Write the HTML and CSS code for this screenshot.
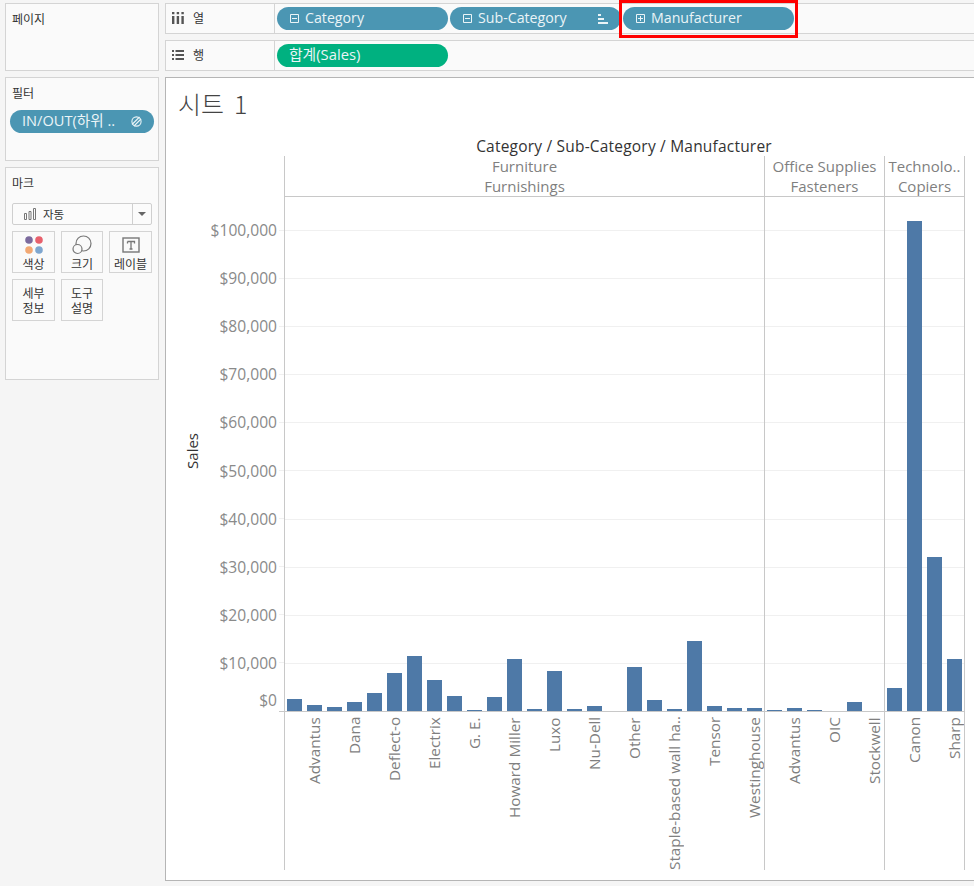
FILE: index.html
```html
<!DOCTYPE html>
<html lang="ko">
<head>
<meta charset="utf-8">
<title>시트 1</title>
<link rel="stylesheet" href="styles.css">
</head>
<body>
<div class="app">
  <aside class="side">
    <section class="card card-pages"><h2 class="card-title">페이지</h2></section>
    <section class="card card-filters">
      <h2 class="card-title">필터</h2>
      <div class="pill pill-filter">
        <span class="pill-text">IN/OUT(하위 ..</span>
        <svg class="link-icon" width="13" height="13" viewBox="0 0 13 13"><circle cx="6.5" cy="6.5" r="4.6" fill="none" stroke="#eaf4f7" stroke-width="1.1"/><path d="M2 9.5 9.5 2M4 11l7-7" stroke="#eaf4f7" stroke-width="1.1" fill="none"/></svg>
      </div>
    </section>
    <section class="card card-marks">
      <h2 class="card-title">마크</h2>
      <div class="select">
        <svg class="select-icon" width="14" height="12" viewBox="0 0 14 12"><path d="M1.5 5.5h2v6h-2zM6 3.5h2v8H6zM10.5.5h2v11h-2z" fill="none" stroke="#777"/></svg>
        <span class="select-text">자동</span>
        <span class="select-arrow"></span>
      </div>
      <div class="mark-grid">
        <div class="mark-btn">
          <svg width="20" height="20" viewBox="0 0 20 20"><circle cx="5" cy="5" r="3.8" fill="#7b6a9d"/><circle cx="15" cy="5" r="3.8" fill="#e8606c"/><circle cx="5" cy="15" r="3.8" fill="#f2a873"/><circle cx="15" cy="15" r="3.8" fill="#7ea6cf"/></svg>
          <span>색상</span>
        </div>
        <div class="mark-btn">
          <svg width="20" height="20" viewBox="0 0 20 20"><circle cx="11.5" cy="8.5" r="7.5" fill="none" stroke="#777" stroke-width="1.2"/><circle cx="5.5" cy="14" r="4.5" fill="#fafafa" stroke="#777" stroke-width="1.2"/></svg>
          <span>크기</span>
        </div>
        <div class="mark-btn">
          <svg width="18" height="20" viewBox="0 0 18 20"><rect x="1" y="3" width="16" height="14" fill="none" stroke="#777" stroke-width="1.4"/><path d="M5.5 6.5h7v2M9 6.5v7.5M7.5 14h3M5.5 6.5v2" fill="none" stroke="#777" stroke-width="1.3"/></svg>
          <span>레이블</span>
        </div>
        <div class="mark-btn mark-btn-text"><span>세부<br>정보</span></div>
        <div class="mark-btn mark-btn-text"><span>도구<br>설명</span></div>
      </div>
    </section>
  </aside>

  <main class="main">
    <div class="shelf">
      <div class="shelf-label">
        <svg width="12" height="12" viewBox="0 0 12 12"><path d="M0 4h2.4v8H0zM4.7 4h2.4v8H4.7zM9.4 4h2.4v8H9.4zM0 0h2.4v2.2H0zM4.7 0h2.4v2.2H4.7zM9.4 0h2.4v2.2H9.4z" fill="#555"/></svg>
        <span>열</span>
      </div>
      <div class="shelf-body">
        <div class="pill">
          <svg class="box-icon" width="9" height="9" viewBox="0 0 9 9"><path d="M.5.5h8v8h-8zM2 4.5h5" fill="none" stroke="#eaf4f7"/></svg>
          <span class="pill-text">Category</span>
        </div>
        <div class="pill">
          <svg class="box-icon" width="9" height="9" viewBox="0 0 9 9"><path d="M.5.5h8v8h-8zM2 4.5h5" fill="none" stroke="#eaf4f7"/></svg>
          <span class="pill-text">Sub-Category</span>
          <svg class="sort-icon" width="10" height="10" viewBox="0 0 10 10"><path d="M0 0h3v2H0zM0 4h6v2H0zM0 8h10v2H0z" fill="#eaf4f7"/></svg>
        </div>
        <div class="pill">
          <svg class="box-icon" width="9" height="9" viewBox="0 0 9 9"><path d="M.5.5h8v8h-8zM2 4.5h5M4.5 2v5" fill="none" stroke="#eaf4f7"/></svg>
          <span class="pill-text">Manufacturer</span>
        </div>
      </div>
    </div>
    <div class="shelf">
      <div class="shelf-label">
        <svg width="12" height="10" viewBox="0 0 12 10"><path d="M0 0h2v2H0zM3.5 0H12v2H3.5zM0 4h2v2H0zM3.5 4H12v2H3.5zM0 8h2v2H0zM3.5 8H12v2H3.5z" fill="#555"/></svg>
        <span>행</span>
      </div>
      <div class="shelf-body">
        <div class="pill pill-green"><span class="pill-text">합계(Sales)</span></div>
      </div>
    </div>

    <section class="viz">
      <h1 class="sheet-title">시트 1</h1>
      <div class="chart-heading">Category / Sub-Category / Manufacturer</div>
      <div class="chart">
        <div class="axis">
          <div class="axis-title"><span>Sales</span></div>
          <div class="axis-ticks">
            <div class="tick"><span>$100,000</span><i></i></div>
            <div class="tick"><span>$90,000</span><i></i></div>
            <div class="tick"><span>$80,000</span><i></i></div>
            <div class="tick"><span>$70,000</span><i></i></div>
            <div class="tick"><span>$60,000</span><i></i></div>
            <div class="tick"><span>$50,000</span><i></i></div>
            <div class="tick"><span>$40,000</span><i></i></div>
            <div class="tick"><span>$30,000</span><i></i></div>
            <div class="tick"><span>$20,000</span><i></i></div>
            <div class="tick"><span>$10,000</span><i></i></div>
            <div class="tick tick-zero"><span>$0</span><i></i></div>
          </div>
        </div>

        <div class="pane pane-lg">
          <div class="pane-head"><div>Furniture</div><div>Furnishings</div></div>
          <div class="plot">
            <b style="height:12px"></b><b style="height:6px"></b><b style="height:4px"></b><b style="height:9px"></b>
            <b style="height:18px"></b><b style="height:38px"></b><b style="height:55px"></b><b style="height:31px"></b>
            <b style="height:15px"></b><b style="height:1px"></b><b style="height:14px"></b><b style="height:52px"></b>
            <b style="height:2px"></b><b style="height:40px"></b><b style="height:2px"></b><b style="height:5px"></b>
            <b style="height:0"></b><b style="height:44px"></b><b style="height:11px"></b><b style="height:2px"></b>
            <b style="height:70px"></b><b style="height:5px"></b><b style="height:3px"></b><b style="height:3px"></b>
          </div>
          <div class="labels">
            <span>Advantus</span><span>Dana</span><span>Deflect-o</span><span>Electrix</span><span>G. E.</span><span>Howard Miller</span>
            <span>Luxo</span><span>Nu-Dell</span><span>Other</span><span>Staple-based wall ha..</span><span>Tensor</span><span>Westinghouse</span>
          </div>
        </div>

        <div class="pane pane-md">
          <div class="pane-head"><div>Office Supplies</div><div>Fasteners</div></div>
          <div class="plot">
            <b style="height:1px"></b><b style="height:3px"></b><b style="height:1px"></b><b style="height:0"></b><b style="height:9px"></b><b style="height:0"></b>
          </div>
          <div class="labels"><span>Advantus</span><span>OIC</span><span>Stockwell</span></div>
        </div>

        <div class="pane pane-sm">
          <div class="pane-head"><div>Technolo..</div><div>Copiers</div></div>
          <div class="plot">
            <b style="height:23px"></b><b style="height:490px"></b><b style="height:154px"></b><b style="height:52px"></b>
          </div>
          <div class="labels"><span>Canon</span><span>Sharp</span></div>
        </div>
      </div>
    </section>
  </main>
</div>
<div class="highlight"></div>
</body>
</html>
```
FILE: styles.css
```css
* { box-sizing: border-box; }
html, body { margin: 0; height: 886px; overflow: hidden; }
body {
  position: relative;
  background: #f5f5f5;
  font-family: "Open Sans", "Noto Sans CJK KR", sans-serif;
  color: #333;
}
.app {
  display: flex;
  gap: 6px;
  padding: 3px 0 0 5px;
  width: 974px;
}
.side { flex: 0 0 154px; min-width: 0; display: flex; flex-direction: column; gap: 6px; }
.main { flex: 0 0 809px; min-width: 0; display: flex; flex-direction: column; gap: 6px; }

.card { background: #fafafa; border: 1px solid #d4d4d4; padding: 7px 0; }
.card-pages { height: 68px; }
.card-filters { height: 84px; }
.card-marks { height: 213px; }
.card-title {
  margin: 0 0 0 6px;
  font: 400 12px/16px "Noto Sans CJK KR", sans-serif;
  color: #333;
}

.pill {
  display: flex;
  align-items: center;
  width: 171px;
  height: 23px;
  padding-left: 13px;
  border-radius: 12px;
  background: #4b96b3;
  color: #eaf4f7;
  font-size: 14.2px;
  white-space: nowrap;
}
.pill-text { line-height: 20px; padding-bottom: 2px; }
.box-icon { margin-right: 6px; flex: none; }
.sort-icon { margin-left: auto; margin-right: 13px; }
.pill-green { background: #00b180; padding-left: 12px; font-size: 14.8px; }
.pill-green .pill-text { padding-bottom: 4px; }
.pill-filter { width: 144px; margin: 9px 0 0 4px; padding-left: 12px; font-size: 14.6px; }
.pill-filter .pill-text { padding-bottom: 4px; }
.link-icon { margin-left: auto; margin-right: 11px; }

.select {
  display: flex;
  align-items: center;
  height: 22px;
  margin: 12px 0 0 6px;
  border: 1px solid #cfcfcf;
  border-radius: 2px;
  background: #fbfbfb;
  width: 140px;
}
.select-icon { margin-left: 10px; }
.select-text { margin-left: 6px; font: 400 11.5px/20px "Noto Sans CJK KR", sans-serif; }
.select-arrow {
  position: relative;
  margin-left: auto;
  width: 19px;
  height: 20px;
  border-left: 1px solid #cfcfcf;
}
.select-arrow::after {
  content: "";
  position: absolute;
  left: 5px;
  top: 8px;
  border: 4px solid transparent;
  border-top: 4px solid #666;
  border-bottom: 0;
}
.mark-grid {
  display: grid;
  grid-template-columns: 43px 42px 43px;
  grid-auto-rows: 42px;
  gap: 6px;
  margin: 6px 0 0 6px;
}
.mark-btn {
  display: flex;
  flex-direction: column;
  align-items: center;
  border: 1px solid #d4d4d4;
  padding-top: 3px;
  font: 400 12px/15px "Noto Sans CJK KR", sans-serif;
  color: #333;
  text-align: center;
  white-space: nowrap;
}
.mark-btn svg { height: 20px; flex: none; margin-bottom: 1px; }
.mark-btn-text { padding-top: 5px; }

.shelf { display: flex; height: 31px; background: #fafafa; border: 1px solid #d4d4d4; border-right: 0; }
.shelf-label {
  display: flex;
  align-items: center;
  flex: 0 0 109px;
  padding: 0 0 2px 6px;
  border-right: 1px solid #d4d4d4;
  font: 400 12px/16px "Noto Sans CJK KR", sans-serif;
}
.shelf-label span { margin-left: 9px; }
.shelf-body { display: flex; gap: 2px; padding: 3px 0 0 2px; }

.viz {
  height: 804px;
  background: #fff;
  border: 1px solid #b5b5b5;
  border-right: 0;
}
.sheet-title {
  margin: 7px 0 0 12px;
  height: 40px;
  font: 300 25px/36px "Noto Sans CJK KR", sans-serif;
  word-spacing: 3px;
  color: #444;
}
.chart-heading {
  margin: 12px 0 0 118px;
  width: 680px;
  height: 19px;
  text-align: center;
  font-size: 15.5px;
  line-height: 19px;
  font-weight: 500;
  letter-spacing: 0.2px;
  color: #333;
}
.chart { display: flex; height: 714px; }
.axis { flex: 0 0 118px; display: flex; position: relative; }
.axis-title {
  flex: 0 0 40px;
  height: 590px;
  display: flex;
  align-items: center;
  justify-content: center;
  padding-left: 12px;
}
.axis-title span {
  writing-mode: vertical-rl;
  transform: rotate(180deg);
  font-size: 15px;
  font-weight: 500;
  color: #333;
}
.axis-ticks { flex: 1; padding-top: 50px; }
.tick {
  display: flex;
  align-items: center;
  justify-content: flex-end;
  height: 48.1px;
  font-size: 15.6px;
  color: #8a8a8a;
}
.tick span { margin-right: 2px; }
.tick i { flex: 0 0 5px; height: 1px; background: #f0f0f0; }
.tick-zero { margin-top: -11px; }
.tick-zero i { background: transparent; }
.axis::after {
  content: "";
  position: absolute;
  right: 0;
  top: 555px;
  width: 5px;
  height: 1px;
  background: #c8c8c8;
}

.pane { min-width: 0; border-left: 1px solid #c8c8c8; }
.pane-lg { flex: 0 0 480px; }
.pane-md { flex: 0 0 120px; }
.pane-sm { flex: 0 0 81px; border-right: 1px solid #c8c8c8; }
.pane-head {
  height: 41px;
  border-bottom: 1px solid #c8c8c8;
  font-size: 15px;
  line-height: 20px;
  color: #7f7f7f;
  text-align: center;
  white-space: nowrap;
}
.plot {
  display: flex;
  align-items: flex-end;
  height: 515px;
  border-bottom: 1px solid #c8c8c8;
  background-image: repeating-linear-gradient(to top, transparent 0, transparent 47.1px, #f0f0f0 47.1px, #f0f0f0 48.1px);
  background-size: 100% 482px;
  background-repeat: no-repeat;
  background-position: bottom;
}
.plot b { flex: 0 0 15px; margin: 0 3px 0 2px; background: #4e79a7; }
.labels { display: flex; gap: 20px; height: 158px; padding: 5px 0 0 19px; }
.labels span {
  flex: 0 0 20px;
  writing-mode: vertical-rl;
  transform: rotate(180deg);
  font-size: 15.3px;
  line-height: 20px;
  color: #7f7f7f;
  white-space: nowrap;
  text-align: right;
  height: 153px;
}

.highlight {
  position: absolute;
  left: 619px;
  top: 0;
  width: 179px;
  height: 38px;
  border: 3px solid #f00;
}
```
